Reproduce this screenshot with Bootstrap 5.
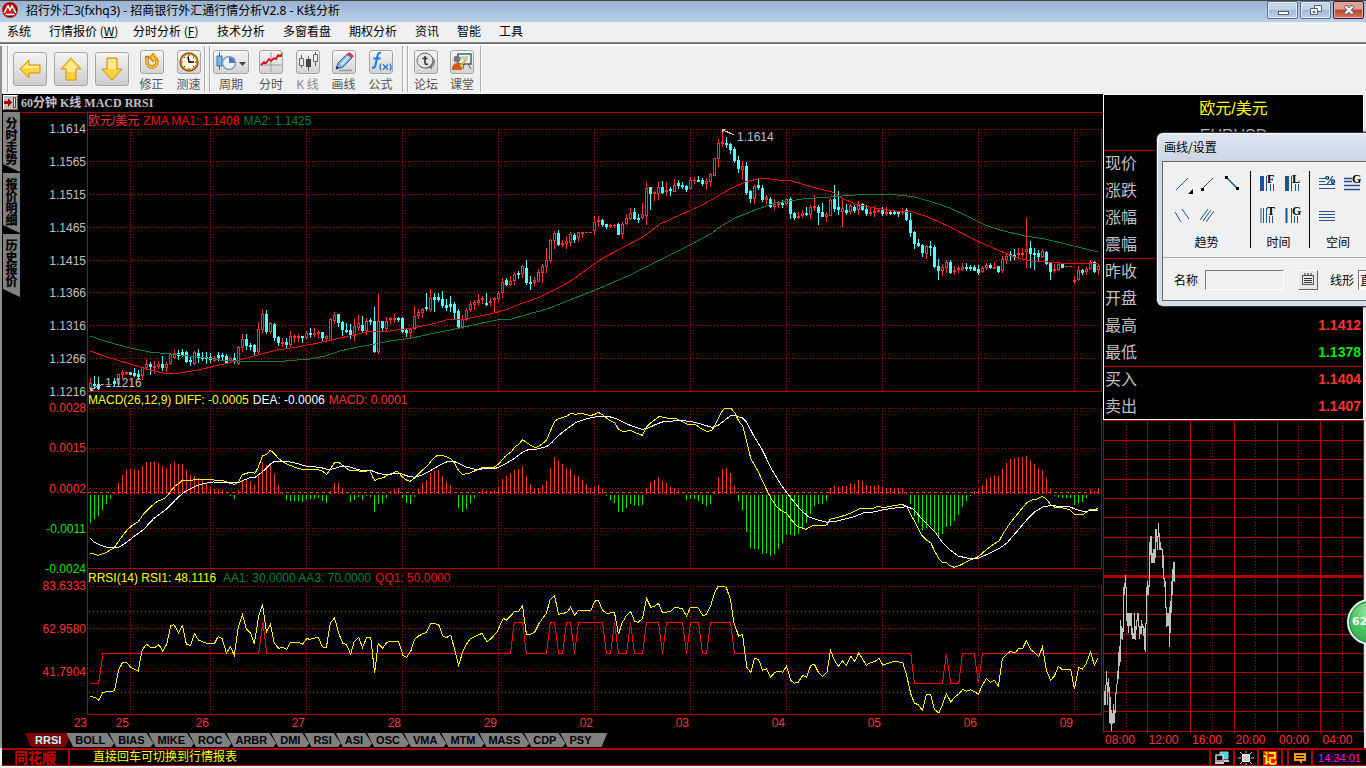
<!DOCTYPE html>
<html lang="zh-CN">
<head>
<meta charset="utf-8">
<meta name="viewport" content="width=device-width, initial-scale=1">
<title>招行外汇3(fxhq3) - K线分析</title>
<link href="https://cdn.jsdelivr.net/npm/bootstrap@5.3.0/dist/css/bootstrap.min.css" rel="stylesheet">
<style>
:root{--line:#b00000;--txt:#c0c0c0;--up:#ff3232;--dn:#00e600}
body{background:#f0f0f0;font:12px/14px "Liberation Sans","Noto Sans CJK SC",sans-serif;color:#000}
.win{overflow:hidden;min-height:100vh}
button{font:inherit;color:inherit}
a{color:inherit;text-decoration:none}
svg{display:block}
.titlebar{height:22px;background:linear-gradient(#98b2d0,#b9d0ea);border-top:1px solid #444;padding:0 2px}
.titlebar h1{font:12px/20px "Noto Sans","Noto Sans CJK SC",sans-serif;margin:0 0 0 8px}
.caps{gap:2px}
.capbtn{width:31px;height:18px;padding:0;border:1px solid #5d7390;border-radius:2px;background:linear-gradient(#c5d5e8 45%,#a1b8d2 50%,#bed2e8);box-shadow:inset 0 0 0 1px #dce8f5}
.capbtn.shut{background:linear-gradient(#dba096 45%,#b9402a 50%,#d87b68);border-color:#43182a;box-shadow:inset 0 0 0 1px #e8aaa0}
.menubar{height:20px;font:12px/18px "Noto Sans CJK SC",sans-serif}
.menubar a{padding:0 7px 0 9px;margin-right:2px;white-space:nowrap}
.menubar a:first-child{padding-left:7px}
.menubar .acc{width:82px;padding-right:0}
.body-frame{border-left:2px solid #909090}
.toolbar{height:52px;border-top:1px solid #8a8a8a;box-shadow:inset 0 1px #666,inset 0 3px #fff;padding:3px 0 0 7px;color:#555;margin-left:-2px}
.tgroup{border:1px solid #aaa;border-width:0 1px 0 1px;height:46px;background:#f0f0f0;box-shadow:inset 1px 0 #fff,1px 0 #fff}
.g1{width:198px}.g2{width:194px}.g3{width:74px}
.bigs{gap:7px;padding:6px 0 0 5px}
.bigbtn{width:34px;height:34px;border:1px solid #a6a6a6;border-radius:3px;background:linear-gradient(#f4f4f4,#cdcdcd);padding:0;display:grid;place-items:center}
.tool{width:37px;border:0;background:none;padding:0;text-align:center}
.tool.wide{width:42px}
.tool.mid{width:38px}
.tool i{display:grid;place-items:center;width:24px;height:24px;margin:0 auto;border:1px solid #a6a6a6;border-radius:3px;background:linear-gradient(#f6f6f6,#d2d2d2)}
.tool.wide i{width:36px}
.tool b{display:block;font:12px/19px "Noto Sans CJK SC",sans-serif;white-space:nowrap}
.tool.off{color:#888;width:35px}
.black{background:#000}
.rail{width:19px;padding-left:1px}
.railbtn{display:block;width:15px;height:15px;border:1px solid;border-color:#fff #666 #666 #fff;background:#c0c0c0;padding:0;margin:1px 0 2px}
.vtab{width:17px;height:60px;margin-bottom:1px;padding:5px 0 0;border:0;background:#808080;color:#000;font:900 12px/12px "Noto Sans CJK SC",sans-serif;clip-path:polygon(0 0,100% 0,100% 100%,0 calc(100% - 8px));display:flex;flex-direction:column;align-items:center}
.vtab:last-child{height:63px}
.vtab span{display:block;height:12px;overflow:visible}
.chartcol{min-width:0}
.ctitle{height:18px;font:700 12px/18px "Liberation Serif","Noto Sans CJK SC",serif;color:var(--txt)}
.cframe{border-top:1px solid var(--line)}
.axis{width:66px;flex:none;padding-right:1px}
.axis span{display:block;height:0;line-height:0;text-align:right}
.plot{border-left:1px solid var(--line);min-width:0;flex:1}
.plot svg{width:100%}
.legend{height:16px;line-height:17px;white-space:nowrap;margin:0}
.legend span{margin-right:4px}
.a1{padding-top:16px;color:var(--txt)}
.p1{height:263px}.p2{height:161px}.p3{height:129px}
.a3{padding:17px 1px 43px 0}
.plot .lg3{height:17px;line-height:18px}
.up{color:var(--up)}.dn{color:var(--dn)}
.yel{color:#ff0}.grn{color:#008040}.rd{color:#f00}
.dates{height:18px;line-height:17px;color:var(--up);text-align:right}
.dates span{flex:96 1 0}
.dates .d66{flex-grow:66}.dates .d42{flex-grow:42}.dates .d80{flex-grow:80}.dates .d30{flex-grow:30}
.tabs{height:15px;padding-left:4px}
.itab{height:14px;border:0;background:#808080;color:#000;font:700 11px/15px "Liberation Sans",sans-serif;padding:0 9px;margin-right:-5px;clip-path:polygon(0 0,calc(100% - 7px) 0,100% 75%,calc(100% - 3px) 100%,7px 100%)}
.itab.on{background:#800000;color:#c0ffff;clip-path:polygon(0 0,100% 0,calc(100% - 6px) 100%,6px 100%);padding:0 10px}
.itab:last-child{padding-right:16px;clip-path:polygon(0 0,100% 0,calc(100% - 6px) 100%,7px 100%)}
.side{width:261px;flex:none}
.quote{border:1px solid #fff;color:var(--txt)}
.quote h2{font:16px/27px "Liberation Sans","Noto Sans CJK SC",sans-serif;color:#ff0;margin:0}
.quote p{margin:0;line-height:28px;height:28px;font-size:16px}
.quote table{width:100%}
.quote tr{height:27px}
.quote tr:last-child{height:26px}
.quote th{font:16px/24px "Noto Sans CJK SC",sans-serif;padding:0 1px;vertical-align:top}
.quote td{text-align:right;font:700 14px/26px "Liberation Sans",sans-serif;padding:0 2px 0 0;vertical-align:top}
.quote .sep{background:linear-gradient(var(--line),var(--line)) top/100% 1px no-repeat}
.mini{height:313px;width:100%}
.hours{line-height:15px;height:15px;color:var(--up)}
.hours span{flex:1;padding-left:2px}
.edge{width:2px;background:#e8e8e8}
.status{height:18px;border:solid var(--line);border-width:2px 0 1px;color:#ff0;margin-left:2px}
.status .cell{border-right:2px solid var(--line);height:15px;display:grid;place-items:center;width:24px}
.status .slim{width:2px}.status .gapcell{width:6px}
.status .brand{width:68px;color:#b80000;font:900 14px/15px "Noto Sans CJK SC",sans-serif}
.hint{padding-left:23px;line-height:15px}
.memo{background:#f00;font-size:14px;line-height:14px}
.status output{color:#f0f;font-size:11px;width:53px;text-align:center;line-height:16px}
.dlg{position:absolute;right:0;top:132px;width:210px;height:175px;border:1px solid #333;border-right:0;border-radius:7px 0 0 7px;background:linear-gradient(#dde6f1,#cbd6e4 28px,#d4dcea);box-shadow:inset 1px 1px #fff,0 0 3px #000;padding:0 0 0 5px;overflow:hidden;font-family:"Noto Sans CJK SC",sans-serif;z-index:5}
.dlg h3{font:12px/28px "Noto Sans CJK SC",sans-serif;margin:0 0 0 2px}
.dlgbody{border:1px solid #666;border-right:0;background:#f0f0f0;height:140px;width:260px}
.dlgtools{height:96px;border-bottom:1px solid #aaa;padding-top:9px}
.dgrp{border-right:1px solid #000;height:77px;width:59px}
.dgrp.w3{width:88px}
.dgrp .ic{height:32px;padding-left:9px}
.dgrp b{font-weight:400;line-height:14px;display:block;text-align:center}
.dgrp+.dgrp b{padding-right:3px}
.dgrp text{font:700 12px "Liberation Serif",serif}
.icb{border:0;background:none;padding:0;width:25px;height:24px}
.nm{width:79px;height:20px;border:1px solid;border-color:#777 #fff #fff #777;background:#f0f0f0}
.kind{width:60px;appearance:none;padding:0 1px;background:#fff}
.lst{width:20px;height:20px;border:1px solid;border-color:#fff #666 #666 #fff;background:#e6e6e6;padding:0;display:grid;place-items:center;margin:0 12px 0 14px}
.nml{margin:0 7px 0 11px}
.kdl{margin-right:4px}
.bubble{position:absolute;right:-27px;top:599px;width:46px;height:46px;border-radius:50%;border:2px solid #e8f3ea;background:radial-gradient(circle at 50% 25%,#a9ecae,#4cc862 45%,#2f9e4c);box-shadow:inset 0 0 0 1px #1d7440;color:#fff;font:700 11px/42px "DejaVu Sans",sans-serif;padding:0 0 0 3px;text-align:left;z-index:6}
</style>
</head>
<body>
<div class="win position-relative d-flex flex-column">
<header class="titlebar d-flex align-items-start">
  <svg width="16" height="18" viewBox="0 0 16 18"><circle cx="8" cy="9" r="8" fill="#c8201c"/><circle cx="8" cy="9" r="6.6" fill="none" stroke="#5a0d0d"/><path d="M2 12 6 5l2 4 2-4 4 7M3.500 13.500h9" fill="none" stroke="#fff" stroke-width="1.500"/></svg>
  <h1 class="me-auto">招行外汇3(fxhq3) - 招商银行外汇通行情分析V2.8 - K线分析</h1>
  <div class="caps d-flex">
    <button class="capbtn" aria-label="最小化"><svg class="mx-auto" width="14" height="12"><rect x="2.500" y="7.500" width="10" height="3" fill="#fff" stroke="#555f70"/></svg></button>
    <button class="capbtn" aria-label="还原"><svg class="mx-auto" width="14" height="14"><g fill="#fff" stroke="#555f70"><path d="M5.500 2.500h7v6h-7z"/><path d="M1.500 5.500h7v6h-7z"/><path d="M4 8.500h2v1H4z"/></g></svg></button>
    <button class="capbtn shut" aria-label="关闭"><svg class="mx-auto" width="14" height="12"><path d="M3 2 11 10M11 2 3 10" stroke="#555f70" stroke-width="4"/><path d="M3.500 2.500 10.500 9.500M10.500 2.500 3.500 9.500" stroke="#fff" stroke-width="2.400"/></svg></button>
  </div>
</header>
<nav class="menubar d-flex">
  <a href="#">系统</a><a href="#" class="acc">行情报价 (<u>W</u>)</a><a href="#" class="acc">分时分析 (<u>F</u>)</a><a href="#">技术分析</a><a href="#">多窗看盘</a><a href="#">期权分析</a><a href="#">资讯</a><a href="#">智能</a><a href="#">工具</a>
</nav>
<main class="body-frame d-flex flex-column">
<div class="toolbar d-flex">
  <div class="tgroup g1 d-flex">
    <div class="bigs d-flex">
      <button class="bigbtn" aria-label="后退"><svg width="24" height="24" viewBox="0 0 24 24"><path d="M2 12 11 3v5h11v8H11v5z" fill="#ffd23c" stroke="#d98b0c"/><path d="M5 11l5-5v3h11v2z" fill="#fff0a0"/></svg></button>
      <button class="bigbtn" aria-label="向上"><svg width="24" height="24" viewBox="0 0 24 24"><path d="M12 1 22 12h-5v11H7V12H2z" fill="#ffd23c" stroke="#d98b0c"/><path d="M12 3 5 11h3v4h8v-4h3z" fill="#ffe98a"/></svg></button>
      <button class="bigbtn" aria-label="向下"><svg width="24" height="24" viewBox="0 0 24 24"><path d="M12 23 22 12h-5V1H7v11H2z" fill="#ffd23c" stroke="#d98b0c"/><path d="M8 2h8v10H8z" fill="#ffe98a"/></svg></button>
    </div>
    <div class="d-flex pt-1 ms-1">
      <button class="tool"><i><svg width="20" height="20" viewBox="0 0 20 20"><path d="M5 5.500v5a5 5 0 1 0 10-1q0-4-5-4M3 5.500h4M12.500 2 9 5.500 12.500 9" fill="none" stroke="#c8800c" stroke-width="3.400"/><path d="M5 5.500v5a5 5 0 1 0 10-1q0-4-5-4M12.500 2.500 9.500 5.500 12.500 8.500" fill="none" stroke="#ffc93c" stroke-width="1.600"/></svg></i><b>修正</b></button>
      <button class="tool"><i><svg width="20" height="20" viewBox="0 0 20 20"><circle cx="10" cy="10" r="8.500" fill="#fffbe6" stroke="#8c5000" stroke-width="2.400"/><circle cx="10" cy="10" r="8" fill="none" stroke="#e6a52a"/><path d="M9 4.500 10 10h5" fill="none" stroke="#000" stroke-width="1.500"/><path d="M10 3v1M10 16v1M3 10h1M16 10h1M5 5l1 1M15 5l-1 1M5 15l1-1M15 15l-1-1" stroke="#333"/></svg></i><b>测速</b></button>
    </div>
  </div>
  <div class="tgroup g2 d-flex pt-1 ms-1">
      <button class="tool wide"><i><svg width="34" height="20" viewBox="0 0 34 20"><path d="M5.500 0v18" stroke="#3477b8"/><path d="M3 4h5v10H3z" fill="#7ab5e8" stroke="#2f6fae"/><circle cx="15" cy="11" r="6.500" fill="#e9f1fb" stroke="#8a9fb8" stroke-width="1.500"/><path d="M15 11V5a6 6 0 0 1 6 6z" fill="#4f75c4"/><path d="M25 10h7l-3.500 4z" fill="#444"/></svg></i><b>周期</b></button>
      <button class="tool mid"><i><svg width="22" height="20" viewBox="0 0 22 20"><path d="M11 0v20M0 13h22" stroke="#999"/><path d="m1 13 3-3 2 1 3-4 2 2 3-3 2 1 2-4 3 1 1-3" fill="none" stroke="#d81818" stroke-width="1.800"/></svg></i><b>分时</b></button>
      <button class="tool off"><i><svg width="20" height="20" viewBox="0 0 20 20"><path d="M3.500 3v13M10.500 4v15M17.500 0v14" stroke="#666"/><path d="M1.500 6.500h4v7h-4zM15.500 2.500h4v7h-4z" fill="#eee" stroke="#666"/><path d="M8 7h5v8H8z" fill="#444"/></svg></i><b>K 线</b></button>
      <button class="tool"><i><svg width="22" height="22" viewBox="0 0 22 22"><path d="M3 18 5 12 14 3l5 4-9 9z" fill="#7db2e6" stroke="#2f5f9a"/><path d="M7 13l8-8 2 1-8 9z" fill="#cfe4fa"/><path d="M14 3l2-2 5 4-2 2z" fill="#e03038"/><path d="M3 18l1-3 2 2z" fill="#223"/><path d="M6 19.500h13" stroke="#999" stroke-width="1.500"/></svg></i><b>画线</b></button>
      <button class="tool"><i><svg width="22" height="22" viewBox="0 0 22 22"><path d="M11 2C8 1 7.500 4 7 7L5.500 14c-.5 3-2 3-3.500 2.500M3.500 7.500h7" fill="none" stroke="#1b7be0" stroke-width="2"/><path d="M11 12.500q-2 3.500 0 7M20 12.500q2 3.500 0 7M13 13.500l5 5M18 13.500l-5 5" fill="none" stroke="#1b7be0" stroke-width="1.300"/></svg></i><b>公式</b></button>
  </div>
  <div class="tgroup g3 d-flex pt-1 ms-1">
      <button class="tool"><i><svg width="20" height="20" viewBox="0 0 20 20"><ellipse cx="12" cy="10" rx="7" ry="6.500" fill="#888"/><ellipse cx="9" cy="8.500" rx="8" ry="7.500" fill="#e4e4e4" stroke="#666"/><path d="M13 14l3 4v-5z" fill="#777"/><path d="M9 4v7q0 2 3 1M6.500 6.500h5" fill="none" stroke="#333" stroke-width="1.600"/></svg></i><b>论坛</b></button>
      <button class="tool"><i><svg width="22" height="20" viewBox="0 0 22 20"><path d="M7 2h13v10H7z" fill="#f5f8fb" stroke="#44606e" stroke-width="1.500"/><path d="M9 5h8M9 7h8" stroke="#8aa"/><path d="M17 12l3 5M13 12l-1 5" stroke="#556"/><circle cx="6" cy="7" r="3.300" fill="#777"/><path d="M1 18q0-7 5-7t5 7z" fill="#d85818"/><path d="M9 14l6-6" stroke="#e2b400" stroke-width="2"/></svg></i><b>课堂</b></button>
  </div>
</div>

<div class="d-flex black">
  <aside class="rail">
    <button class="railbtn" aria-label="收起"><svg width="13" height="13"><path d="M0 5h4V2l4 4.500L4 11V8H0z" fill="#a00000"/><path d="M9.500 1.500h2v10h-2z" fill="#eee" stroke="#c00"/></svg></button>
    <div class="d-flex flex-column">
      <button class="vtab"><span>分</span><span>时</span><span>走</span><span>势</span></button>
      <button class="vtab"><span>报</span><span>价</span><span>明</span><span>细</span></button>
      <button class="vtab"><span>历</span><span>史</span><span>报</span><span>价</span></button>
    </div>
  </aside>
  <section class="chartcol flex-grow-1">
    <div class="ctitle">60分钟 K线 MACD RRSI</div>
    <div class="cframe">
      <div class="d-flex">
        <div class="axis a1 d-flex flex-column justify-content-between"><span>1.1614</span><span>1.1565</span><span>1.1515</span><span>1.1465</span><span>1.1415</span><span>1.1366</span><span>1.1316</span><span>1.1266</span><span>1.1216</span></div>
        <div class="plot"><p class="legend"><span class="up">欧元/美元</span><span class="rd">ZMA MA1: 1.1408</span><span class="grn">MA2: 1.1425</span></p><svg id="price" class="p1" viewBox="88 129 1015 263" preserveAspectRatio="none"></svg></div>
      </div>
      <div class="d-flex">
        <div class="axis a1 up d-flex flex-column justify-content-between"><span>0.0028</span><span>0.0015</span><span>0.0002</span><span class="dn">-0.0011</span><span class="dn">-0.0024</span></div>
        <div class="plot"><p class="legend"><span class="yel">MACD(26,12,9) DIFF: -0.0005</span><span class="text-white">DEA: -0.0006</span><span class="up">MACD: 0.0001</span></p><svg id="macd" class="p2" viewBox="88 408 1015 161" preserveAspectRatio="none"></svg></div>
      </div>
      <div class="d-flex">
        <div class="axis a3 up d-flex flex-column justify-content-between"><span>83.6333</span><span>62.9580</span><span>41.7904</span></div>
        <div class="plot"><p class="legend lg3"><span class="yel">RRSI(14) RSI1: 48.1116</span> <span class="grn">AA1: 30.0000 AA3: 70.0000</span><span class="rd">QQ1: 50.0000</span></p><svg id="rsi" class="p3" viewBox="88 586 1015 129" preserveAspectRatio="none"></svg></div>
      </div>
      <div class="dates d-flex"><span class="d66">23</span><span class="d42">25</span><span class="d80">26</span><span>27</span><span>28</span><span>29</span><span>02</span><span>03</span><span>04</span><span>05</span><span>06</span><span>09</span><span class="d30"></span></div>
    </div>
    <div class="tabs d-flex"><button class="itab on">RRSI</button><button class="itab">BOLL</button><button class="itab">BIAS</button><button class="itab">MIKE</button><button class="itab">ROC</button><button class="itab">ARBR</button><button class="itab">DMI</button><button class="itab">RSI</button><button class="itab">ASI</button><button class="itab">OSC</button><button class="itab">VMA</button><button class="itab">MTM</button><button class="itab">MASS</button><button class="itab">CDP</button><button class="itab">PSY</button></div>
  </section>
  <aside class="side">
    <div class="quote">
      <h2 class="text-center">欧元/美元</h2>
      <p class="text-center">EURUSD</p>
      <table>
        <tr class="sep"><th scope="row">现价</th><td></td></tr>
        <tr><th scope="row">涨跌</th><td></td></tr>
        <tr><th scope="row">涨幅</th><td></td></tr>
        <tr><th scope="row">震幅</th><td></td></tr>
        <tr class="sep"><th scope="row">昨收</th><td></td></tr>
        <tr><th scope="row">开盘</th><td></td></tr>
        <tr><th scope="row">最高</th><td class="up">1.1412</td></tr>
        <tr><th scope="row">最低</th><td class="dn">1.1378</td></tr>
        <tr class="sep"><th scope="row">买入</th><td class="up">1.1404</td></tr>
        <tr><th scope="row">卖出</th><td class="up">1.1407</td></tr>
      </table>
    </div>
    <svg id="mini" class="mini" viewBox="1103 420 261 313" preserveAspectRatio="none"></svg>
    <div class="hours d-flex"><span>08:00</span><span>12:00</span><span>16:00</span><span>20:00</span><span>00:00</span><span>04:00</span></div>
  </aside>
  <div class="edge"></div>
</div>
</main>
<footer class="black status d-flex">
  <div class="cell brand">同花顺</div>
  <div class="hint me-auto">直接回车可切换到行情报表</div>
  <div class="d-flex">
    <div class="cell slim"></div>
    <div class="cell"><svg width="16" height="14"><path d="M6 1h8v7H6z" fill="#30e0f0" stroke="#bbb"/><path d="M2 4h7v6H2z" fill="#000" stroke="#ccc" stroke-width="1.500"/><path d="M1 12h9M10 10h5" stroke="#ccc" stroke-width="2"/></svg></div>
    <div class="cell"><svg width="16" height="14"><path d="M4.500 3.500h7v7h-7z" fill="#ccc" stroke="#fff"/><path d="M8 0v2M8 12v2M0 7h3M13 7h3M2 1l2 2M14 1l-2 2M2 13l2-2M14 13l-2-2" stroke="#ccc"/></svg></div>
    <div class="cell"><b class="memo yel">记</b></div>
    <div class="cell gapcell"></div>
    <div class="cell"><svg width="14" height="14"><path d="M1 2h12v8H9v3L6 10H1z" fill="#ff9a10"/><path d="M3 4.500h8M3 7.500h8" stroke="#000"/></svg></div>
    <output>14:34:01</output>
  </div>
</footer>

<section class="dlg">
  <h3>画线/设置</h3>
  <div class="dlgbody">
    <div class="dlgtools d-flex">
      <div class="dgrp w3">
        <div class="ic d-flex"><button class="icb" aria-label="线段"><svg width="25" height="24"><path d="M4 19 16 7" stroke="#1f5296"/><path d="M21 18v5h-5z"/></svg></button><button class="icb" aria-label="射线"><svg width="25" height="24"><path d="M5 18 16 7" stroke="#1f5296"/><path d="M4 17h3v3H4z"/></svg></button><button class="icb" aria-label="两点线"><svg width="25" height="24"><path d="M5 7 16 18" stroke="#1f5296" stroke-width="1.500"/><path d="M3 5h3v3H3zM14 16h3v3h-3z"/></svg></button></div>
        <div class="ic d-flex"><button class="icb" aria-label="通道"><svg width="25" height="24"><path d="M3 9l6 10M10 6l7 10" stroke="#1f5296"/></svg></button><button class="icb" aria-label="平行线"><svg width="25" height="24"><path d="M3 17 11 6M6 18 14 7M9 19 17 8" stroke="#1f5296"/></svg></button></div>
        <b>趋势</b>
      </div>
      <div class="dgrp">
        <div class="ic d-flex"><button class="icb" aria-label="斐波那契"><svg width="25" height="24"><path d="M2 5v15" stroke="#1f5296" stroke-width="4"/><path d="M6.500 5v15M10.500 13v7M13.500 13v7" stroke="#1f5296"/><text x="7" y="12">F</text></svg></button><button class="icb" aria-label="时间 L"><svg width="25" height="24"><path d="M2 5v15" stroke="#1f5296" stroke-width="4"/><path d="M6.500 5v15M10.500 13v7M13.500 13v7" stroke="#1f5296"/><text x="7" y="12">L</text></svg></button></div>
        <div class="ic d-flex"><button class="icb" aria-label="时间 T"><svg width="25" height="24"><path d="M1 5v15M3.500 5v15M6.500 5v15M9.500 13v7M12.500 13v7" stroke="#1f5296"/><text x="7" y="12">T</text></svg></button><button class="icb" aria-label="时间 G"><svg width="25" height="24"><path d="M1.500 5v15" stroke="#1f5296" stroke-width="2"/><path d="M6.500 5v15M9.500 13v7M12.500 13v7" stroke="#1f5296"/><text x="7" y="12">G</text></svg></button></div>
        <b>时间</b>
      </div>
      <div class="dgrp border-0">
        <div class="ic d-flex"><button class="icb" aria-label="百分比"><svg width="25" height="24"><path d="M0 7.500h6M0 10.500h6M0 13.500h16M0 17.500h16" stroke="#1f5296"/><text x="5" y="13">%</text></svg></button><button class="icb" aria-label="空间 G"><svg width="25" height="24"><path d="M0 7.500h8M0 10.500h8M0 14.500h16M0 18.500h16" stroke="#1f5296" stroke-width="1.500"/><text x="8" y="12">G</text></svg></button></div>
        <div class="ic d-flex"><button class="icb" aria-label="等分线"><svg width="25" height="24"><path d="M0 8.500h16M0 11.500h16M0 14.500h16M0 17.500h16" stroke="#1f5296"/></svg></button></div>
        <b>空间</b>
      </div>
    </div>
    <div class="d-flex align-items-center pt-2 mt-1">
      <label for="nm" class="nml">名称</label><input id="nm" class="nm">
      <button class="lst" aria-label="列表"><svg width="14" height="14"><path d="M1.500 2.500h11v9h-11z" fill="none" stroke="#555"/><path d="M4 0v3M7 0v3M10 0v3M3 5.500h8M3 7.500h8M3 9.500h8" stroke="#333"/></svg></button>
      <label for="ls" class="kdl">线形</label><select id="ls" class="nm kind"><option>直线</option></select>
    </div>
  </div>
</section>
<button class="bubble">62</button>
</div>
<script src="https://cdn.jsdelivr.net/npm/bootstrap@5.3.0/dist/js/bootstrap.bundle.min.js"></script>
<script>
const LINE='#b00000', GRID_X=[130,210,306,402,498,594,690,786,882,978,1074];
// one path; crisp edges and a stroke that keeps its width when the plot is stretched
function path(d,stroke,extra=''){return `<path d="${d}" fill="none" stroke="${stroke}" shape-rendering="crispEdges" vector-effect="non-scaling-stroke" ${extra}/>`}
const DOT='stroke-dasharray="1 2"';
function grid(top,bottom,rows){
  let s='';
  rows.forEach(y=>s+=path(`M90 ${y+.5}H1101`,LINE,DOT));
  GRID_X.forEach(x=>s+=path(`M${x+.5} ${top}V${bottom}`,LINE,DOT));
  return s+path(`M88 ${bottom+.5}H1102M1101.5 ${top}V${bottom}`,LINE);
}
// segments: [x origin, y origin, x scale, y scale, "x,y;x,y"]
function trace(segs,stroke){
  const pts=segs.flatMap(([ox,oy,kx,ky,t])=>t.split(';').map(p=>{const[x,y]=p.split(',');return (ox+x/kx).toFixed(1)+' '+(oy+y/ky).toFixed(1)}));
  return path('M'+pts.join('L'),stroke);
}
// candles, 4px apart: direction, high, body top, body bottom, low
const K=`r378,383,388,389 c376,384,385,388 c377,384,388,389 r384,384,384,384 r384,384,384,384 r384,384,384,384 c378,381,383,386 r374,374,383,384 r370,372,374,378 r371,372,373,374 c372,372,374,374 c368,373,375,376 c370,374,376,379 r367,367,375,379 r359,364,367,369 c362,364,366,374 r361,366,367,373 r361,364,366,368 c356,364,367,370 r362,364,367,371 r353,354,363,364 r350,353,357,358 c350,353,355,359 c349,352,354,356 c351,352,361,362 c357,360,361,365 r351,352,363,364 c349,353,357,362 c352,357,358,360 c352,357,358,363 c353,357,359,362 r356,358,360,361 c352,355,357,360 c353,355,356,359 c354,356,362,363 r357,358,360,362 c353,358,361,363 r346,347,363,364 r334,339,347,351 c334,339,345,349 c343,345,346,349 c344,345,351,355 r322,329,351,353 r309,314,329,333 c310,314,331,333 r322,323,331,333 c323,324,337,340 c336,337,342,345 r338,342,343,346 c338,342,344,348 r331,336,344,347 r334,336,337,342 r334,336,337,341 c336,336,337,342 r331,333,337,339 c328,333,334,337 r328,333,334,336 r330,332,333,337 c332,332,337,341 r335,336,338,340 r318,319,340,340 r312,315,320,323 c314,314,322,326
c321,322,329,335 c323,330,331,332 c324,330,335,338 r319,326,335,340 r315,323,327,330 c316,325,330,331 r318,321,330,334 c318,320,321,324 c307,321,351,352 r294,321,351,353 c321,321,327,331 r317,321,328,331 r317,318,319,323 r314,318,319,322 c317,318,319,321 c317,318,331,332 c328,330,332,336 r328,329,332,338 r306,316,328,329 r309,312,315,318 r308,309,312,317 c293,307,308,310 r289,298,309,311 c293,297,299,311 c293,297,299,301 c291,299,305,307 c299,305,307,310 c296,304,306,311 c302,304,312,319 c309,311,326,328 r315,319,326,328 r308,310,319,320 r301,304,309,311 r300,302,304,309 r294,300,302,305 r296,298,299,303 c293,303,304,305 r298,301,302,305 r297,298,299,311 r291,293,298,301 r278,282,292,297 c278,280,284,285 r276,281,284,285 r272,274,280,284 c271,273,274,278 r265,266,273,277 c260,268,282,284 c276,282,283,289 r277,280,282,285 r269,272,281,281 r264,266,272,282 r248,260,266,272 r239,240,260,262 r231,233,240,248 c230,233,244,245 r240,243,244,246 r236,241,243,248 r232,234,242,245 c233,235,239,242 r232,232,237,241 r232,232,233,237 r232,232,232,232 r232,232,232,232 r216,222,230,233 r216,220,221,226 c219,220,224,226 c224,224,226,228 r224,225,226,227 r224,225,225,227 c223,224,234,234 r222,224,233,238 r214,218,223,224 r208,213,218,219 c208,212,218,219 c214,218,219,222 r203,214,217,218 r182,188,215,224 c187,187,193,209 r191,192,193,200 r182,187,193,199 c181,187,192,193 r182,190,191,195 c187,189,190,195 r179,185,191,191 c180,183,185,188 c182,185,186,188 c185,186,189,191 r177,180,188,188 r177,180,180,183 c176,180,181,181 c178,180,183,185 r178,181,183,189 r173,174,181,186 r158,158,175,175 r139,143,158,166 r132,142,143,146
c137,143,144,147 c143,144,149,153 c147,149,160,162 c156,160,168,172 r161,166,169,179 c162,166,192,194 c190,191,198,202 r185,186,198,203 c178,185,187,189 c185,188,199,201 r195,197,199,203 c197,199,206,207 r199,204,206,209 r201,203,204,207 c200,203,204,207 r198,199,203,205 c197,199,213,218 c212,213,217,219 r212,216,217,218 r210,213,215,217 c207,213,214,215 r205,207,214,218 r195,206,207,210 c205,207,212,224 c203,212,216,216 r212,214,216,221 r198,200,215,215 c185,199,208,211 c191,207,209,214 r199,208,211,226 c204,210,212,214 r204,206,211,213 c205,207,210,212 r201,205,209,214 c203,204,209,210 c205,209,213,215 r207,212,213,215 r206,211,212,216 r208,210,211,212 c207,210,213,215 r207,212,213,215 c210,212,213,214 c211,212,213,214 c211,212,213,216 r208,211,212,214 c208,210,219,220 c213,220,232,236 c231,232,243,248 c239,243,245,246 c244,245,252,256 r245,246,253,258 c241,246,247,255 c245,247,266,267 c259,266,270,279 r264,267,270,275 r260,262,267,272 c260,262,272,273 r266,270,271,274 r266,268,269,272 r263,267,269,270 c263,267,268,270 c265,267,268,270 c265,267,270,270 c265,269,272,274 r266,268,271,272 r263,265,267,269 c263,265,267,268 r262,267,268,268 c266,266,271,272 r256,259,270,272 r254,256,259,263 c251,254,255,260 c249,255,256,259 r248,253,254,259 r248,253,254,256 r218,249,251,267 c241,248,253,267 c248,253,254,269 c250,253,256,261 r249,251,256,257 c251,252,263,264 c262,263,271,279 r264,269,270,272 r263,264,269,270 c263,264,267,267 r266,266,266,266 r266,266,266,266 r276,280,281,283 r266,270,279,280 c269,270,272,274 r267,269,271,274 r260,262,268,269 c261,262,271,272 r264,266,269,274`.split(/\s+/);
let s=grid(129,391,[129,161,194,227,260,292,325,358]);
K.forEach((k,i)=>{
  const [h,t,b,l]=k.slice(1).split(',').map(Number), x=90+4*i, up=k[0]=='r', c=up?'#ff3232':'#54fcfc';
  if(l>h) s+=`<rect x="${x}" y="${h}" width="1" height="${l-h+1}" fill="${c}" shape-rendering="crispEdges"/>`;
  s+=`<rect x="${x-1}" y="${t}" width="3" height="${b-t+1}" fill="${c}" shape-rendering="crispEdges"/>`;
  if(up&&b-t>1) s+=`<rect x="${x}" y="${t+1}" width="1" height="${b-t-1}" fill="#000" shape-rendering="crispEdges"/>`;
});
s+=trace([[0,0,1,1,'90,351;107,357;130,364;150,370;163,373;180,373;198,370;215,366;228,363;243,359;265,353;277,350;297,347;318,343;340,338;358,334;370,331;390,331;412,328;432,324;450,319;465,319;480,316;490,314;505,310;523,303;540,297;550,292;562,286;574,279;583,272;603,258;622,248;643,237;660,224;680,215;700,206;713,199;723,193;732,188;745,182;762,178;778,180;792,181;812,187;832,192;842,198;855,204;875,208;895,211;910,211;928,217;950,227;975,240;1000,251;1015,257;1030,261;1048,262;1060,263;1098,263']],'#f00');
s+=trace([[0,0,1,1,'90,336;108,342;130,348;150,352;180,355;200,357;220,360;240,361;285,361;310,359;325,356;340,351;358,347;375,344;390,341;412,338;430,334;455,329;473,325;497,320;512,319;525,315;547,309;575,298;605,286;630,275;660,260;690,245;712,233;720,227;735,218;755,210;775,203;790,201;803,199;830,197;855,195;890,194;915,197;932,202;950,208;967,216;985,225;1000,230;1025,236;1045,239;1070,245;1098,252']],'#008040');
s+=path('M723 130 734 135M92 389 103 384','#ccc')+'<path d="M722 129h4l-4 4zM90 387v4h4z" fill="#ccc"/><g fill="#c0c0c0" font-size="12"><text x="737" y="141">1.1614</text><text x="105" y="387">1.1216</text></g>';
price.innerHTML=s;

// histogram: bar ends, in thirds of a pixel from y=390; above 312 the bar hangs under the zero line
const H='395,383,375,357,340,323,307,279,255,240,236,237,240,228,216,216,216,219,228,234,222,216,222,222,240,255,258,264,270,279,291,297,297,300,311,315,323,300,273,270,273,285,255,216,225,225,252,285,307,327,330,330,330,332,327,324,323,321,330,335,303,279,279,294,311,332,327,319,327,316,317,362,338,335,321,303,297,294,321,335,338,318,297,279,270,249,243,240,258,276,285,311,350,362,353,335,320,311,297,303,303,300,291,267,258,249,240,237,228,258,282,297,295,285,273,234,201,210,222,234,237,255,258,270,282,294,290,285,297,315,326,335,362,362,350,338,342,345,341,294,276,270,261,273,279,291,294,300,311,326,323,323,329,338,345,338,303,261,237,234,249,288,329,356,422,470,473,473,488,485,494,488,473,455,431,431,434,428,410,395,368,344,338,338,329,294,288,291,288,288,279,282,270,273,285,288,288,285,291,294,294,294,294,294,306,338,374,395,416,410,401,419,437,428,407,404,389,371,347,329,315,303,297,285,267,261,255,258,237,219,207,204,201,201,198,210,222,234,240,264,297,315,317,320,320,320,341,335,332,320,297,303,294'.split(',').map(Number);
s=grid(408,568,[408,448,488,528])+path('M88 492.5H1101','#ff3232','stroke-dasharray="3 3"');
H.forEach((v,i)=>{const y=Math.round(390+v/3),up=v<=312;s+=`<rect x="${90+4*i}" y="${up?y:495}" width="1" height="${up?494-y:y-495+1}" fill="${up?'#ff3232':'#00e600'}" shape-rendering="crispEdges"/>`});
s+=trace([[0,390,3,3,'271,490;283,492;295,496;307,492;319,487;343,473;355,455;367,438;385,416;400,404;415,395;430,373;450,352;470,335;490,327;500,320;515,300;525,288;540,278;548,270;570,272;590,268;630,269;670,272;690,280;703,283;715,276;727,254;740,250;750,246;765,250;775,232;787,198;800,193;811,181;822,190;835,205;850,217;870,226;890,234;910,239;955,239;968,244;980,253;992,236;1003,219;1015,216;1028,226;1050,243;1075,242;1088,246;1110,241;1117,258;1124,272;1135,266;1150,263;1168,252'],
[390,390,3,3,'0,252;22,244;37,260;50,271;61,274;75,263;95,242;110,230;125,211;140,197;155,196;170,200;185,208;195,222;205,240;217,253;235,251;265,238;280,232;310,234;325,223;345,200;365,184;375,170;385,164;398,149;412,159;425,168;437,173;455,163;470,150;480,125;494,94;505,86;530,79;543,70;555,73;575,70;600,77;615,73;625,67;640,76;660,92;675,98;685,117;700,125;722,121;740,130;757,136;770,110;785,96;808,79;830,84;860,86;875,94;890,102;915,103;935,117;950,124;965,122;978,100;990,75;1000,58;1012,54;1025,57;1035,70;1045,90'],
[740,390,3,3,'0,99;8,108;20,155;32,205;45,228;55,245;67,272;85,310;95,328;110,350;125,363;140,370;155,390;170,408;185,414;198,418;215,408;230,406;250,408;262,404;270,388;290,383;315,376;340,366;362,355;380,357;400,355;415,348;430,353;460,347;487,343;500,350;510,370;525,395;545,436;560,451;572,458;585,485;597,506;607,517;620,518;630,527;643,532;660,526;690,510;715,500;740,478;760,463;778,452;790,430;810,400;830,375;860,338;875,330;890,328;907,319;920,328;932,344;945,352;970,354;990,359;1003,373;1030,373;1050,358;1065,360;1075,354']],'#ff0');
s+=trace([[0,390,3,3,'271,445;285,458;300,465;320,472;343,474;360,470;380,457;400,441;430,419;460,387;490,364;500,357;525,331;550,308;570,297;590,287;610,281;640,276;690,277;715,278;735,269;750,263;765,262;785,247;800,234;815,219;825,214;860,214;890,220;920,229;960,232;985,239;1000,236;1020,230;1045,229;1065,236;1090,242;1115,242;1135,250;1160,255'],
[390,390,3,3,'0,253;20,250;35,252;55,259;75,262;95,256;120,243;145,228;165,217;185,213;200,217;225,230;260,239;290,235;315,236;340,225;370,208;400,185;415,179;440,177;470,170;485,158;505,137;530,117;560,96;590,86;620,80;655,79;680,87;710,102;740,113;757,118;775,114;800,102;820,95;850,93;880,92;910,96;940,104;965,112;985,106;1005,90;1020,78;1035,75'],
[740,390,3,3,'0,82;8,84;20,97;40,135;67,180;95,238;120,280;150,321;180,357;205,380;230,389;262,397;290,393;340,381;370,369;400,366;430,359;470,353;500,350;520,357;540,380;560,402;585,425;605,455;630,480;655,498;680,504;715,505;745,491;775,477;800,460;830,425;860,390;885,365;910,350;930,347;965,349;990,351;1010,359;1035,365;1055,361;1075,360']],'#fff');
macd.innerHTML=s;

s=grid(586,714,[586,628,671])+path('M89 611.5H1101M89 692.5H1101','#008040','stroke-dasharray="1 3"');
s+=trace([[0,565,2.8,3,'252,355;276,355;288,266;724,266;736,172;747,266;1429,266;1440,172;1463,172;1474,266;1530,266;1541,172;1553,172;1564,266'],
[540,565,2.751,3,'50,266;62,266;73,172;84,172;95,266;106,172;172,172;183,266;194,266;205,172;216,266;238,266;249,172;260,266;282,266;293,172;326,172;337,266;348,172;392,172;403,266;414,172;436,172;447,266;458,266;469,172;524,172;535,266;1020,266;1030,355;1107,355;1118,266;1130,355;1152,355;1162,266;1195,266;1206,355;1217,266;1535,266']],'#f00');
s+=trace([[0,565,2.8,3,'252,393;268,399;277,406;288,383;298,380;312,380;321,375;332,315;343,293;355,293;366,307;387,318;398,256;410,238;422,247;434,247;445,239;456,259;467,237;478,182;487,179;500,203;511,182;522,238;533,241;545,206;556,226;580,235;601,235;611,214;622,221;634,264;645,245;656,271;667,187;679,149;690,192;702,204;712,237;724,155;735,118;746,201;757,178;768,234;780,250;792,247;803,253;813,232;822,234;837,232;847,237;859,221;868,223;891,217;903,246;914,247;925,173;937,159;948,205;960,235;970,238;982,268;991,232;1004,217;1015,247;1027,217;1038,216;1049,325;1059,235;1071,250;1083,232;1095,229;1116,229;1128,271;1139,277;1151,256;1160,224;1172,213;1184,206;1194,203;1206,175;1228,178;1240,213;1250,218;1262,210;1273,253;1284,301;1296,259;1307,236;1317,221;1350,205;1363,230;1374,222;1392,200;1409,160;1418,165;1430,153;1440,140;1452,139;1463,122;1474,208;1485,208;1497,202;1509,176;1520,159;1530,145'],
[540,565,2.751,3,'28,104;40,91;51,148;62,146;75,141;84,127;95,151;106,136;140,136;150,110;155,106;161,106;172,136;183,145;205,143;216,208;226,173;237,153;249,139;260,168;270,172;282,161;293,100;305,127;315,124;326,115;337,143;360,139;372,126;392,132;403,153;414,127;432,127;437,132;448,152;458,148;470,121;480,85;490,64;505,64;513,69;524,104;533,170;546,213;557,208;569,307;580,323;590,280;601,283;612,315;623,312;634,337;645,323;657,318;668,322;678,303;690,346;700,355;711,351;723,331;733,337;745,301;755,298;766,322;777,334;790,321;799,256;810,286;821,304;832,288;843,301;855,274;866,290;877,263;888,284;898,301;910,292;921,290;933,280;943,300;955,296;975,289;998,293;1008,328;1020,387;1030,414;1041,420;1052,436;1063,388;1075,390;1085,433;1097,444;1107,419;1118,386;1130,411;1140,397;1152,387;1163,373;1173,379;1184,374;1206,387;1216,363;1228,340;1239,352;1250,346;1261,364;1272,280;1284,268;1294,259;1307,264;1316,251;1328,250;1338,227;1350,254;1360,262;1372,275;1382,245;1393,316;1405,346;1415,333;1426,304;1438,315;1460,313;1470,373;1482,307;1492,313;1503,295;1515,260;1525,301;1535,278']],'#ff0');
rsi.innerHTML=s;

s='';
[420,440,459,479,498,517,537,556,576,595,614,634,653,672,692,711,731].forEach(y=>s+=path(`M1103 ${y+.5}H1364`,LINE,y==576?'stroke-width="3"':''));
[1103,1147,1190,1234,1277,1320,1363].forEach(x=>s+=path(`M${x+.5} 420V733`,LINE));
[1126,1169,1212,1255,1298,1342].forEach(x=>s+=path(`M${x+.5} 420V731`,LINE,'stroke-dasharray="1 2"'));
// intraday ticks: x, high, low in thirds of a pixel from (1096,420)
'26,812,855;29,795,855;31,753,795;34,787,855;37,773,815;40,802,910;43,832,912;46,870,932;49,880,912;52,852,910;55,870,908;58,820,880;61,792,822;64,753,793;67,695,775;70,678,738;73,600,725;76,617,655;79,625,660;82,500,635;85,490,525;88,465,503;91,500,602;94,580,620;97,580,641;100,580,620;103,580,620;106,580,645;109,625,658;112,640,658;115,580,658;118,617,658;121,600,630;124,580,603;127,578,620;130,617,656;133,617,640;136,600,641;139,612,625;142,617,647;145,625,690;148,610,698;151,500,610;154,483,525;157,495,525;160,367,503;163,348,405;166,348,430;169,400,430;172,387,430;175,387,428;178,328,415;181,328,367;184,348,390;187,308,350;190,340,390;193,367,390;196,385,390;199,387,445;202,405,476;205,475,503;208,483,563;211,560,620;214,580,620;217,580,620;220,560,680;223,543,640;226,483,580;229,447,525;232,427,485;235,427,487'.split(';').forEach(t=>{const[x,a,b]=t.split(',');s+=`<rect x="${1096+Math.floor(x/3)}" y="${420+Math.round(a/3)}" width="1" height="${Math.round((b-a)/3)}" fill="#c0c0c0" shape-rendering="crispEdges"/>`});
mini.innerHTML=s;
</script>
</body>
</html>
